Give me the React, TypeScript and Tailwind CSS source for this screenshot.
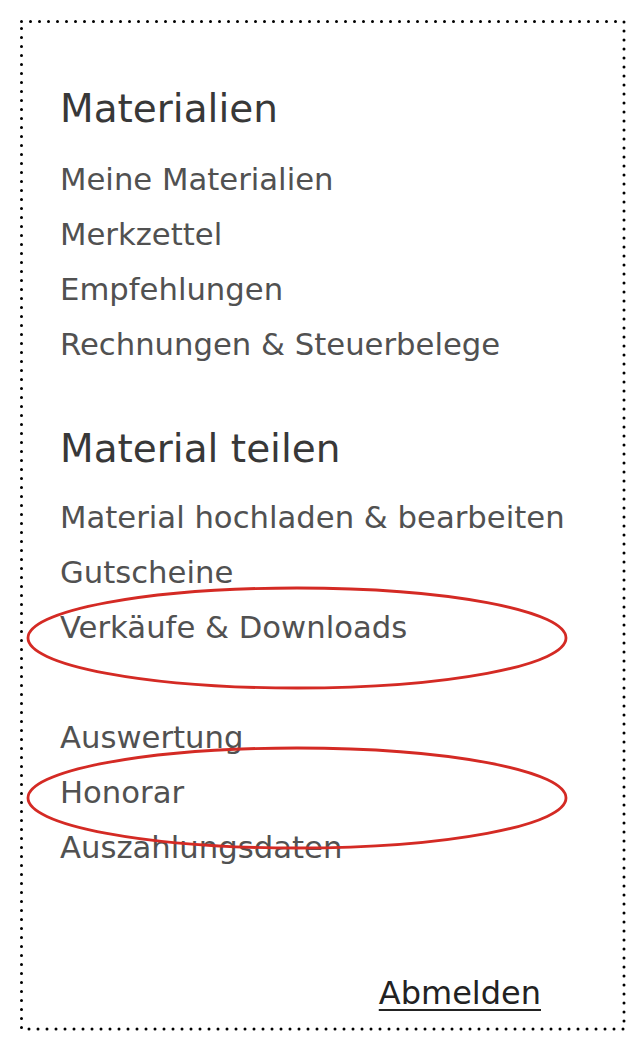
import React from "react";

const sectionOne = ["Meine Materialien", "Merkzettel", "Empfehlungen", "Rechnungen & Steuerbelege"];
const sectionTwo = ["Material hochladen & bearbeiten", "Gutscheine", "Verkäufe & Downloads", "", "Auswertung", "Honorar", "Auszahlungsdaten"];

function Item({ label }: { label: string }) {
	return (
		<li className="h-[55px] text-[30.7px] leading-[55px] whitespace-nowrap text-[#515151]">
			{label}
		</li>
	);
}

export default function App() {
	return (
		<div className="relative h-[1043px] w-[641px] bg-white pl-[21px] pt-[21px] font-['DejaVu_Sans',sans-serif]">
			<div className="flex h-[1007px] w-[602px] flex-col pl-[39px] pr-[82px] pt-[63px]">
				<h2 className="h-[50px] text-[39px] leading-[50px] text-[#383838]">Materialien</h2>
				<ul className="mt-[18px]">
					{sectionOne.map(l => <Item key={l} label={l} />)}
				</ul>
				<h2 className="mt-[52px] h-[50px] text-[39px] leading-[50px] text-[#383838]">Material teilen</h2>
				<ul className="mt-[16px]">
					{sectionTwo.map((l, i) => <Item key={i} label={l} />)}
				</ul>
				<div className="mt-auto mb-[7px] flex justify-end">
					<a href="#" className="text-[32px] leading-[55px] text-[#222] underline decoration-2 underline-offset-[5px]">Abmelden</a>
				</div>
			</div>

			{/* dotted frame + red marker ellipses drawn on top */}
			<svg className="pointer-events-none absolute inset-0" width="641" height="1043" viewBox="0 0 641 1043">
				<rect x="21.5" y="21.5" width="602.5" height="1007.5" fill="none" stroke="#000" strokeWidth="3" strokeLinecap="round" strokeDasharray="0 9" />
				<ellipse cx="297" cy="638" rx="269" ry="50" fill="none" stroke="#d42a24" strokeWidth="2.8" />
				<ellipse cx="297" cy="798" rx="269" ry="50" fill="none" stroke="#d42a24" strokeWidth="2.8" />
			</svg>
		</div>
	);
}
